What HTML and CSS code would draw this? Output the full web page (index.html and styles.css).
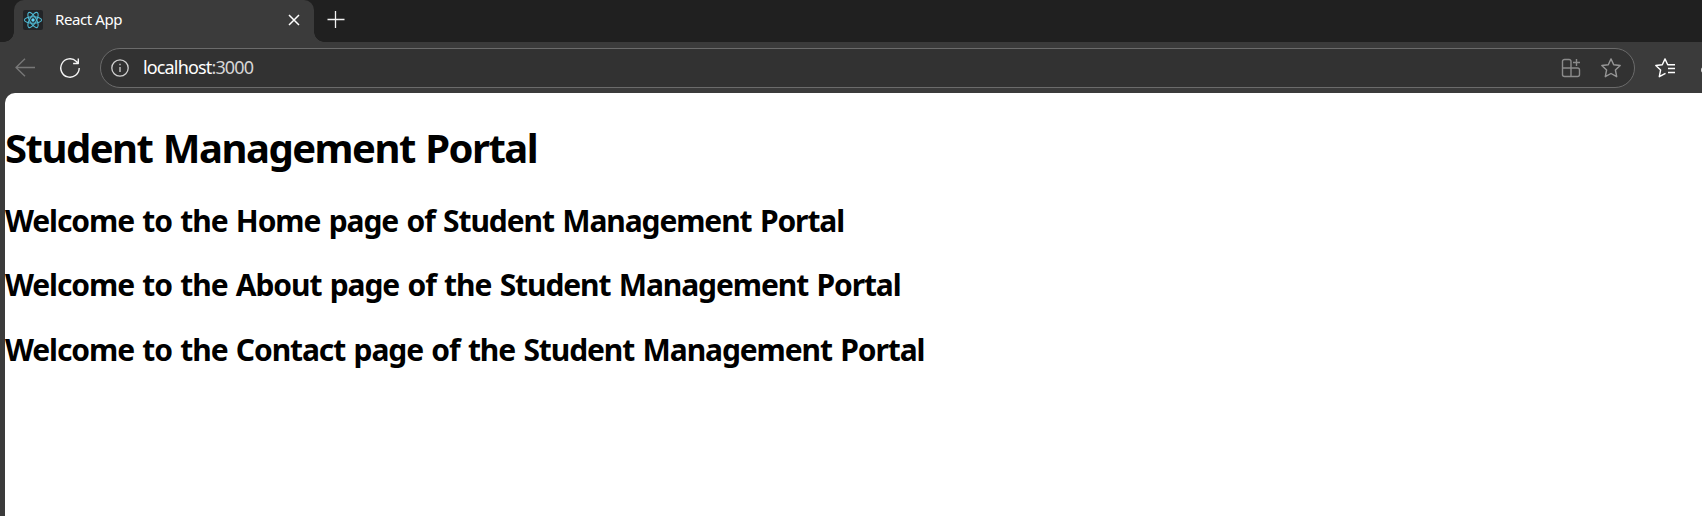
FILE: index.html
```html
<!DOCTYPE html>
<html lang="en">
<head>
<meta charset="utf-8">
<title>React App</title>
<link rel="stylesheet" href="styles.css">
</head>
<body>
<div class="browser">
  <header class="tabs">
    <div class="tab">
      <svg class="favicon" viewBox="0 0 20 20"><rect width="20" height="20" rx="2" fill="#222427"/><g fill="none" stroke="#4fb9d3" stroke-width="1.1"><ellipse cx="10" cy="10" rx="8.6" ry="3.3"/><ellipse cx="10" cy="10" rx="8.6" ry="3.3" transform="rotate(60 10 10)"/><ellipse cx="10" cy="10" rx="8.6" ry="3.3" transform="rotate(120 10 10)"/></g><circle cx="10" cy="10" r="1.7" fill="#61dafb"/></svg>
      <span class="tab-title">React App</span>
      <svg class="close" viewBox="0 0 12 12"><path d="M1 1 11 11M11 1 1 11"/></svg>
    </div>
    <svg class="plus" viewBox="0 0 18 18"><path d="M.5 9.5h17M8.5 1v17"/></svg>
  </header>
  <nav class="toolbar">
    <svg class="icon back" viewBox="0 0 20 20"><path d="M20 9.5H1M10 .8 1 9.5l9 8.700"/></svg>
    <svg class="icon refresh" viewBox="0 0 20 20"><path d="M19.200 10a9.200 9.200 0 1 1-2.800-6.600L18.300 5.400M18.300.5v5h-5.200"/></svg>
    <div class="address">
      <svg class="info" viewBox="0 0 18 18"><circle cx="9" cy="9" r="8.200"/><path d="M9 8v5M9 4.800v1.500"/></svg>
      <span class="url">localhost<span class="port">:3000</span></span>
      <svg class="icon apps" viewBox="0 0 20 20"><path d="M10 10V3.500a2 2 0 0 0-2-2H3.500a2 2 0 0 0-2 2v13a2 2 0 0 0 2 2h13a2 2 0 0 0 2-2V12a2 2 0 0 0-2-2h-15M10 10v8.500M15.500 1v7M12 4.500h7"/></svg>
      <svg class="icon star" viewBox="0 0 20 20"><path d="M10 .9 12.700 6.800 19.200 7.500 14.400 12 15.700 18.700 10 15.500 4.300 18.700 5.600 12 .8 7.500 7.300 6.800Z"/></svg>
    </div>
    <svg class="icon favorites" viewBox="0 0 20 20"><path d="M20 6.800H12.700L10 .9 7.300 6.800.8 7.500 5.600 12 4.300 18.700 10.500 15.300M13 10.500h7M13 14.500h7"/></svg>
    <span class="clipped"></span>
  </nav>
  <main class="page">
    <h1>Student Management Portal</h1>
    <h2 class="home">Welcome to the Home page of Student Management Portal</h2>
    <h2 class="about">Welcome to the About page of the Student Management Portal</h2>
    <h2 class="contact">Welcome to the Contact page of the Student Management Portal</h2>
  </main>
</div>
</body>
</html>
```
FILE: styles.css
```css
* { box-sizing: border-box; }
body { margin: 0; font-family: "Noto Sans", "Open Sans", sans-serif; }
svg { flex: none; fill: none; display: block; overflow: visible; stroke-linejoin: round; }
.browser { width: 100%; height: 516px; background: #3b3b3b; display: flex; flex-direction: column; overflow: hidden; }
.tabs { height: 42px; flex: none; display: flex; padding-left: 14px; background: #202020; }
.tab { position: relative; width: 300px; height: 42px; background: #3b3b3b; border-radius: 10px 10px 0 0; display: flex; align-items: center; padding: 0 14px 2px 9px; }
.tab::before, .tab::after { content: ""; position: absolute; bottom: 0; width: 10px; height: 10px; }
.tab::before { left: -10px; background: radial-gradient(circle at 0 0, transparent 9.500px, #3b3b3b 10px); }
.tab::after { right: -10px; background: radial-gradient(circle at 100% 0, transparent 9.500px, #3b3b3b 10px); }
.favicon { width: 20px; height: 20px; }
.tab-title { margin: -2px 0 0 12px; color: #fff; font-size: 15px; line-height: 20px; letter-spacing: -0.4px; white-space: nowrap; }
.close { width: 12px; height: 12px; margin-left: auto; stroke: #fff; stroke-width: 1.500; }
.plus { width: 18px; height: 18px; margin: 10px 0 0 13px; stroke: #f2f2f2; stroke-width: 1.300; }
.toolbar { height: 51px; flex: none; display: flex; align-items: center; padding-left: 15px; }
.icon { width: 20px; height: 20px; stroke-width: 1.400; }
.back { stroke: #777; }
.refresh { stroke: #f5f5f5; margin-left: 25px; }
.address { width: 1535px; height: 40px; flex: none; margin-left: 20px; padding: 0 13px 0 10px; border: 1px solid #6b6b6b; border-radius: 20px; background: #323232; display: flex; align-items: center; }
.info { width: 18px; height: 18px; stroke: #d0d0d0; stroke-width: 1.300; }
.url { margin: -2px 0 0 14px; color: #fff; font-size: 18px; line-height: 24px; letter-spacing: -0.850px; }
.port { color: #d5d5d5; }
.apps { margin-left: auto; stroke: #8b8b8b; }
.star { margin-left: 20px; stroke: #969696; }
.favorites { margin-left: 20px; stroke: #fff; }
.clipped { width: 6px; height: 6px; margin: 4px 0 0 26px; border-radius: 50%; background: #ddd; flex: none; }
.page { flex: 1; margin-left: 5px; background: #fff; border-top-left-radius: 10px; color: #000; }
h1, h2 { margin: 0; white-space: nowrap; font-weight: 700; }
h1 { padding-top: 27px; font-size: 40px; line-height: 56px; letter-spacing: -1.500px; word-spacing: 1.500px; }
h2 { font-size: 30px; line-height: 40px; letter-spacing: -1.100px; word-spacing: 1.700px; }
.home { margin-top: 25px; }
.about { margin-top: 24px; }
.contact { margin-top: 25px; }
```
